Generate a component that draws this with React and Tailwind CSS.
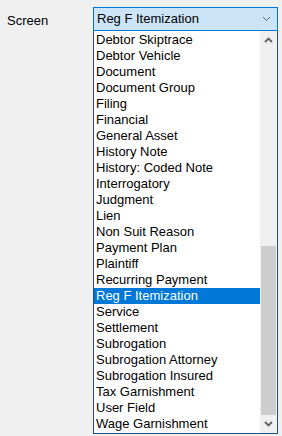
import React from 'react';

const items = [
    'Debtor Skiptrace',
    'Debtor Vehicle',
    'Document',
    'Document Group',
    'Filing',
    'Financial',
    'General Asset',
    'History Note',
    'History: Coded Note',
    'Interrogatory',
    'Judgment',
    'Lien',
    'Non Suit Reason',
    'Payment Plan',
    'Plaintiff',
    'Recurring Payment',
    'Reg F Itemization',
    'Service',
    'Settlement',
    'Subrogation',
    'Subrogation Attorney',
    'Subrogation Insured',
    'Tax Garnishment',
    'User Field',
    'Wage Garnishment'
];

const selected = 'Reg F Itemization';

function Chevron({ up, bold, className }) {
    return (
        <svg width="9" height="6" viewBox="0 0 9 6" className={className}>
            <path d={up ? 'M1 5 L4.5 1.5 L8 5' : 'M1 1 L4.5 4.5 L8 1'} fill="none" stroke="currentColor" strokeWidth={bold ? 1.8 : 1} />
        </svg>
    );
}

export default function App() {
    const rows = items.map((item, index) => {
        const active = item === selected;
        return (
            <div
                key={index}
                className={'h-4 leading-4 pl-[2px] whitespace-nowrap ' + (active ? 'bg-[#0078d7] text-white' : 'text-black')}
            >
                {item}
            </div>
        );
    });

    return (
        <div className="w-[282px] h-[436px] bg-[#f0f0f0] text-[13px] overflow-hidden" style={{ fontFamily: '"Liberation Sans", Arial, sans-serif' }}>
            <div className="flex pl-[7px]">
                <div className="w-[86px] pt-[11px] text-black">Screen</div>
                <div className="w-[185px] flex flex-col pt-[7px]">
                    <div className="h-[24px] border border-[#0078d7] bg-[#cce4f7] flex items-center justify-between pl-[3px] pr-[6px]">
                        <span className="text-black">Reg F Itemization</span>
                        <Chevron className="text-[#606060]" />
                    </div>
                    <div className="h-[403px] border border-[#1f4f7f] border-t-0 bg-white flex">
                        <div className="flex-1 pt-[1px]">{rows}</div>
                        <div className="w-[17px] bg-[#f0f0f0] flex flex-col">
                            <div className="h-[17px] flex items-center justify-center">
                                <Chevron up bold className="text-[#606060]" />
                            </div>
                            <div className="h-[198px]" />
                            <div className="mx-[1px] h-[169px] bg-[#cdcdcd]" />
                            <div className="flex-1 flex items-center justify-center">
                                <Chevron bold className="text-[#606060]" />
                            </div>
                        </div>
                    </div>
                </div>
            </div>
        </div>
    );
}
